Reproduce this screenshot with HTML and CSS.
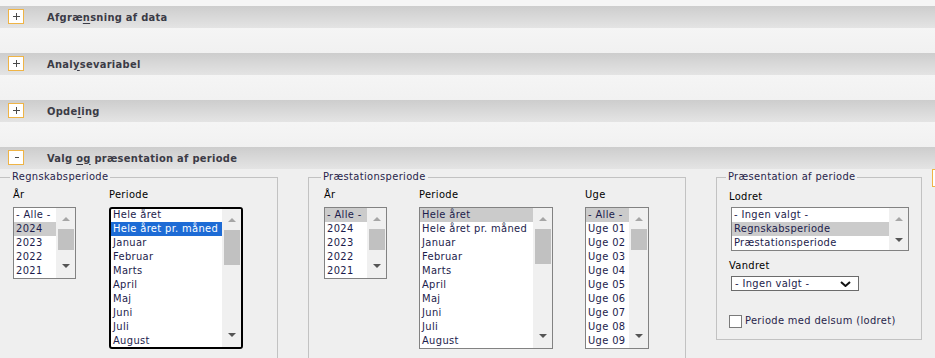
FILE: index.html
```html
<!DOCTYPE html>
<html lang="da">
<head>
    <meta charset="UTF-8">
    <title>Valg af periode</title>
    <link rel="stylesheet" href="styles.css">
</head>
<body>
    <div class="top-strip"></div>

    <section class="panel">
        <div class="panel-head"><span class="toggle plus"></span><h2>Afgræ<u>n</u>sning af data</h2></div>
        <div class="panel-gap"></div>
    </section>

    <section class="panel">
        <div class="panel-head"><span class="toggle plus"></span><h2>Anal<u>y</u>sevariabel</h2></div>
        <div class="panel-gap"></div>
    </section>

    <section class="panel">
        <div class="panel-head"><span class="toggle plus"></span><h2>Opde<u>l</u>ing</h2></div>
        <div class="panel-gap"></div>
    </section>

    <section class="panel">
        <div class="panel-head"><span class="toggle minus"></span><h2>Valg <u>og</u> præsentation af periode</h2></div>
        <div class="panel-body">

            <!-- Regnskabsperiode -->
            <fieldset class="group group-regnskab">
                <legend>Regnskabsperiode</legend>
                <div class="field">
                    <label>År</label>
                    <div class="listbox lb-year">
                        <ul class="options">
                            <li>- Alle -</li>
                            <li class="sel">2024</li>
                            <li>2023</li>
                            <li>2022</li>
                            <li>2021</li>
                        </ul>
                        <div class="scroll"><span class="btn"><i class="arrow up"></i></span><span class="thumb"></span><span class="track"></span><span class="btn btn-down"><i class="arrow down"></i></span></div>
                    </div>
                </div>
                <div class="field">
                    <label>Periode</label>
                    <div class="listbox lb-period focused">
                        <ul class="options">
                            <li>Hele året</li>
                            <li class="sel-active">Hele året pr. måned</li>
                            <li>Januar</li>
                            <li>Februar</li>
                            <li>Marts</li>
                            <li>April</li>
                            <li>Maj</li>
                            <li>Juni</li>
                            <li>Juli</li>
                            <li>August</li>
                        </ul>
                        <div class="scroll"><span class="btn"><i class="arrow up"></i></span><span class="thumb thumb-long"></span><span class="track"></span><span class="btn btn-down"><i class="arrow down"></i></span></div>
                    </div>
                </div>
            </fieldset>

            <!-- Præstationsperiode -->
            <fieldset class="group group-praestation">
                <legend>Præstationsperiode</legend>
                <div class="field">
                    <label>År</label>
                    <div class="listbox lb-year">
                        <ul class="options">
                            <li class="sel">- Alle -</li>
                            <li>2024</li>
                            <li>2023</li>
                            <li>2022</li>
                            <li>2021</li>
                        </ul>
                        <div class="scroll"><span class="btn"><i class="arrow up"></i></span><span class="thumb"></span><span class="track"></span><span class="btn btn-down"><i class="arrow down"></i></span></div>
                    </div>
                </div>
                <div class="field">
                    <label>Periode</label>
                    <div class="listbox lb-period">
                        <ul class="options">
                            <li class="sel">Hele året</li>
                            <li>Hele året pr. måned</li>
                            <li>Januar</li>
                            <li>Februar</li>
                            <li>Marts</li>
                            <li>April</li>
                            <li>Maj</li>
                            <li>Juni</li>
                            <li>Juli</li>
                            <li>August</li>
                        </ul>
                        <div class="scroll"><span class="btn"><i class="arrow up"></i></span><span class="thumb thumb-long"></span><span class="track"></span><span class="btn btn-down"><i class="arrow down"></i></span></div>
                    </div>
                </div>
                <div class="field">
                    <label>Uge</label>
                    <div class="listbox lb-week">
                        <ul class="options">
                            <li class="sel">- Alle -</li>
                            <li>Uge 01</li>
                            <li>Uge 02</li>
                            <li>Uge 03</li>
                            <li>Uge 04</li>
                            <li>Uge 05</li>
                            <li>Uge 06</li>
                            <li>Uge 07</li>
                            <li>Uge 08</li>
                            <li>Uge 09</li>
                        </ul>
                        <div class="scroll"><span class="btn"><i class="arrow up"></i></span><span class="thumb"></span><span class="track"></span><span class="btn btn-down"><i class="arrow down"></i></span></div>
                    </div>
                </div>
            </fieldset>

            <!-- Præsentation af periode -->
            <fieldset class="group group-praesentation">
                <legend>Præsentation af periode</legend>
                <label class="side-label">Lodret</label>
                <div class="listbox lb-axis">
                    <ul class="options">
                        <li>- Ingen valgt -</li>
                        <li class="sel">Regnskabsperiode</li>
                        <li>Præstationsperiode</li>
                    </ul>
                    <div class="scroll"><span class="btn"><i class="arrow up"></i></span><span class="track"></span><span class="btn btn-short"><i class="arrow down"></i></span></div>
                </div>
                <label class="side-label label-vandret">Vandret</label>
                <div class="dropdown">
                    <span>- Ingen valgt -</span>
                    <svg width="11" height="6" viewBox="0 0 11 6"><polyline points="1,1 5.5,5 10,1" fill="none" stroke="#111" stroke-width="2"/></svg>
                </div>
                <label class="check-row"><span class="checkbox"></span>Periode med delsum (lodret)</label>
            </fieldset>

            <span class="corner-toggle"></span>
        </div>
    </section>
</body>
</html>
```

FILE: styles.css
```css
body {
    margin: 0;
    background: #efefef;
    font-family: "DejaVu Sans Condensed", "DejaVu Sans", sans-serif;
    font-stretch: condensed;
    font-size: 11px;
    letter-spacing: 0.35px;
    color: #000;
    overflow: hidden;
}

.top-strip {
    height: 6px;
    background: #f5f5f5;
}

/* Panel headers */
.panel-head {
    height: 22px;
    display: flex;
    align-items: center;
    padding-left: 8px;
    background: linear-gradient(#cdcdcd, #e4e4e4);
}

.panel-head h2 {
    margin: 0 0 0 23px;
    font-size: 11px;
    font-weight: bold;
    letter-spacing: 0.3px;
    color: #3b3b46;
}

.panel-head u {
    text-decoration-thickness: 1px;
    text-underline-offset: 2px;
}

.panel-gap {
    height: 25px;
    background: linear-gradient(#f5f5f5, #f1f1f1);
}

.toggle {
    position: relative;
    width: 16px;
    height: 15px;
    box-sizing: border-box;
    border: 1px solid #efb446;
    background: #fff;
    margin-top: -1px;
}

.toggle::before,
.toggle::after {
    content: "";
    position: absolute;
    background: #4a4a4a;
}

.plus::before {
    left: 4px;
    top: 6px;
    width: 7px;
    height: 1px;
}

.plus::after {
    left: 7px;
    top: 3px;
    width: 1px;
    height: 7px;
}

.minus::before {
    left: 6px;
    top: 6px;
    width: 4px;
    height: 1px;
}

.minus::after {
    display: none;
}

/* Open panel body */
.panel-body {
    display: flex;
    align-items: flex-start;
    gap: 30px;
    margin-left: -1px;
    padding-top: 1px;
    background: #efefef;
}

.group {
    box-sizing: border-box;
    margin: 0;
    border: 1px solid #c2c2c2;
    padding: 4px 0 0 13px;
    min-height: 220px;
    display: flex;
    align-items: flex-start;
    gap: 33px;
    flex-shrink: 0;
}

.group legend {
    margin-left: -3px;
    padding: 0 2px;
    line-height: 14px;
    color: #27244a;
}

.group-regnskab {
    width: 279px;
}

.group-praestation {
    width: 378px;
    padding-left: 15px;
    gap: 32px;
}

.group-praesentation {
    width: 206px;
    height: 170px;
    min-height: 0;
    padding: 6px 0 0 12px;
    display: block;
}

.field label {
    display: block;
    line-height: 14px;
    margin-bottom: 5px;
}

/* Listboxes */
.listbox {
    box-sizing: border-box;
    display: flex;
    border: 1px solid #828282;
    background: #fff;
    overflow: hidden;
}

.lb-year {
    width: 63px;
    height: 72px;
}

.lb-period {
    width: 134px;
    height: 142px;
}

.lb-week {
    width: 64px;
    height: 142px;
}

.lb-axis {
    width: 178px;
    height: 44px;
    margin-left: 2px;
}

.listbox.focused {
    border: 2px solid #000;
    border-radius: 3px;
}

.listbox.focused .options {
    margin-top: -1px;
}

.options {
    flex: 1;
    margin: 0;
    padding: 0;
    list-style: none;
    min-width: 0;
}

.options li {
    height: 14px;
    line-height: 14px;
    padding-left: 2px;
    white-space: nowrap;
    overflow: hidden;
    color: #1c1c4c;
}

.options li.sel {
    background: #cbcbcb;
}

.options li.sel-active {
    background: #1d6bd5;
    color: #fff;
}

.scroll {
    width: 19px;
    flex-shrink: 0;
    display: flex;
    flex-direction: column;
    background: #f0f0f0;
}

.scroll .btn {
    height: 21px;
    display: flex;
    align-items: center;
    justify-content: center;
    flex-shrink: 0;
}

.scroll .btn-down {
    height: 25px;
}

.scroll .btn-short {
    height: 21px;
}

.scroll .track {
    flex: 1;
}

.thumb {
    height: 21px;
    margin: 0 1px 0 2px;
    background: #c1c1c1;
    flex-shrink: 0;
}

.thumb-long {
    height: 35px;
}

.arrow {
    width: 0;
    height: 0;
    border-left: 4px solid transparent;
    border-right: 4px solid transparent;
}

.arrow.up {
    border-bottom: 4px solid #a6a6a6;
}

.arrow.down {
    border-top: 4px solid #555;
}

/* Præsentation af periode */
.side-label {
    display: block;
    line-height: 14px;
    margin-bottom: 3px;
}

.label-vandret {
    margin-top: 8px;
    margin-bottom: 3px;
}

.dropdown {
    box-sizing: border-box;
    width: 128px;
    height: 15px;
    margin-left: 2px;
    border: 1px solid #6b6b6b;
    background: #fff;
    display: flex;
    align-items: center;
    justify-content: space-between;
    padding: 0 7px 0 3px;
    color: #1c1c4c;
    line-height: 13px;
}

.dropdown svg {
    display: block;
}

.check-row {
    display: flex;
    align-items: center;
    margin-top: 23px;
    line-height: 14px;
    color: #27244a;
}

.checkbox {
    box-sizing: border-box;
    width: 13px;
    height: 13px;
    margin-right: 3px;
    border: 1px solid #7a7a7a;
    background: #fff;
}

.corner-toggle {
    width: 20px;
    height: 18px;
    margin-left: -20px;
    margin-top: -1px;
    box-sizing: border-box;
    border: 1px solid #efb446;
    background: #fff;
    flex-shrink: 0;
}
```
